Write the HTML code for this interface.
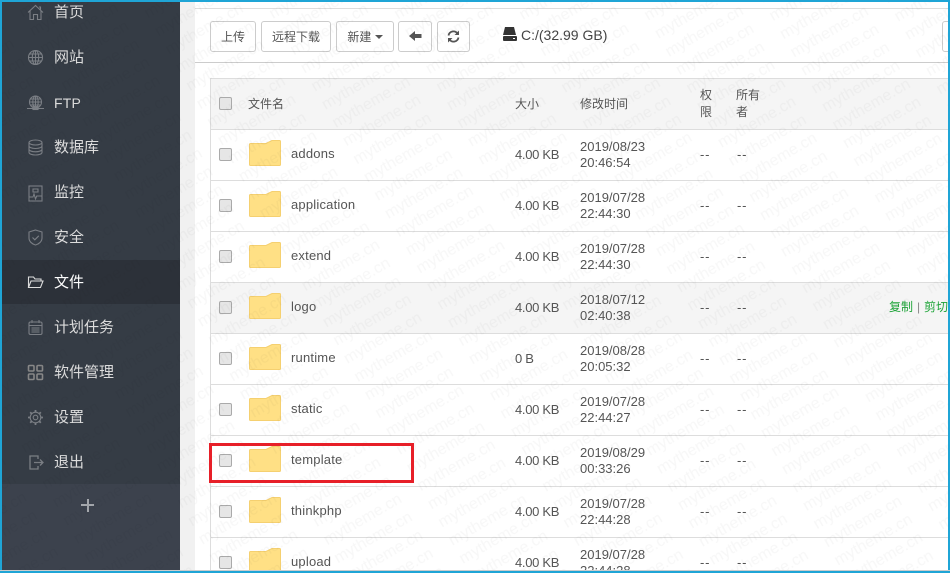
<!DOCTYPE html>
<html><head><meta charset="utf-8"><style>
html,body{margin:0;padding:0;background:#fff}
#p{position:relative;width:950px;height:573px;overflow:hidden;background:#fff;font:13px/16px "Liberation Sans","Noto Sans CJK SC",sans-serif;color:#555}
.a,.t,.s,.b,.c{position:absolute}
.t{white-space:nowrap}
.s{left:54px;font-size:15px;line-height:20px;color:#ddd;white-space:nowrap}
.b{top:21px;height:29px;border:1px solid #ccc;border-radius:3px;background:#fff;font-size:12px;line-height:30px;text-align:center;color:#555;box-sizing:content-box}
.c{left:219px;width:11px;height:11px;border:1px solid #aaa;border-radius:2px;background:#e6e6e6}
.l{position:absolute;left:210px;right:0;height:1px;background:#ddd}
.z{font-size:12px}
.k{letter-spacing:-.3px}
.d{letter-spacing:.8px}
.n{letter-spacing:.2px}
svg.i{position:absolute;left:27px;width:17px;height:17px;fill:none;stroke:#7b7f85;stroke-width:1.1}
</style></head><body><div id="p">

<div class="a" style="left:2px;top:0;width:178px;height:573px;background:#353c45"></div>
<div class="a" style="left:2px;top:260px;width:178px;height:44px;background:#2c3139"></div>
<div class="a" style="left:2px;top:484px;width:178px;height:89px;background:#3c424d"></div>
<div class="a" style="left:180px;top:0;width:15px;height:573px;background:#f1f1f1"></div>

<svg class="i" style="top:4px" viewBox="0 0 17 17"><path d="M1 8.500 8.500 1.500 16 8.500M3 7v8.500h3.500V10.500h4v5H14V7M12 3h1.500v2.500"/></svg>
<div class="s" style="top:3px">首页</div>
<svg class="i" style="top:49px" viewBox="0 0 17 17"><circle cx="8.500" cy="8.500" r="7"/><ellipse cx="8.500" cy="8.500" rx="3.200" ry="7"/><path d="M1.500 8.500h14M2.500 5h12M2.500 12h12M8.500 1.500v14"/></svg>
<div class="s" style="top:48px">网站</div>
<svg class="i" style="top:95px" viewBox="0 0 17 17"><circle cx="8.500" cy="7" r="6"/><ellipse cx="8.500" cy="7" rx="2.700" ry="6"/><path d="M2.500 7h12M3.500 4h10M3.500 10h10M8.500 1v10M0 13.500h17"/><rect x="6" y="11.500" width="5" height="3" fill="#7b7f85"/></svg>
<div class="s" style="top:93px;font-size:14px;letter-spacing:.2px">FTP</div>
<svg class="i" style="top:139px" viewBox="0 0 17 17"><ellipse cx="8.500" cy="3.500" rx="6.500" ry="2.500"/><path d="M2 3.500v10c0 1.400 2.900 2.500 6.500 2.500s6.500-1.100 6.500-2.500v-10M2 7c0 1.400 2.900 2.500 6.500 2.500S15 8.400 15 7M2 10.300c0 1.400 2.900 2.500 6.500 2.500s6.500-1.100 6.500-2.500"/></svg>
<div class="s" style="top:138px">数据库</div>
<svg class="i" style="top:185px" viewBox="0 0 17 17"><rect x="2" y="1" width="13" height="15"/><path d="M2 12h4l1-3 1.500 5 1.200-3H15M6 4h5v3H6z"/></svg>
<div class="s" style="top:183px">监控</div>
<svg class="i" style="top:229px" viewBox="0 0 17 17"><path d="M8.500 1 15 3v6c0 3.500-3 6-6.500 7C5 15 2 12.500 2 9V3zM5.500 8.500l2.300 2.300 4-4"/></svg>
<div class="s" style="top:228px">安全</div>
<svg class="i" style="top:274px;stroke:#ddd" viewBox="0 0 17 17"><path d="M1.500 13.500V3h5l1.500 2h6v2M1.500 13.500l2.500-6.500h12l-2.500 6.500z"/></svg>
<div class="s" style="top:273px;color:#fff">文件</div>
<svg class="i" style="top:319px" viewBox="0 0 17 17"><rect x="2" y="3" width="13" height="12.500" rx="1.500"/><path d="M5 1v3M12 1v3M2 6.500h13M4.500 9h8M4.500 11h8M4.500 13h8"/></svg>
<div class="s" style="top:318px">计划任务</div>
<svg class="i" style="top:364px;stroke-width:1.600;stroke:#888" viewBox="0 0 17 17"><rect x="1.500" y="1.500" width="5.500" height="5.500" rx="1"/><rect x="10" y="1.500" width="5.500" height="5.500" rx="1"/><rect x="1.500" y="10" width="5.500" height="5.500" rx="1"/><rect x="10" y="10" width="5.500" height="5.500" rx="1"/></svg>
<div class="s" style="top:363px">软件管理</div>
<svg class="i" style="top:409px" viewBox="0 0 17 17"><circle cx="8.500" cy="8.500" r="2.300"/><circle cx="8.500" cy="8.500" r="5.300"/><path d="M8.500 1v2.200M8.500 13.800V16M1 8.500h2.200M13.800 8.500H16M3.200 3.200l1.550 1.550M12.250 12.250l1.550 1.550M3.200 13.800l1.550-1.550M12.250 4.750l1.550-1.550" stroke-width="1.800"/></svg>
<div class="s" style="top:408px">设置</div>
<svg class="i" style="top:454px;stroke-width:1.300" viewBox="0 0 17 17"><path d="M11 5V2H3v13h8v-3M7 8.500h9M13 5.500l3 3-3 3"/></svg>
<div class="s" style="top:453px">退出</div>
<div class="a" style="left:81px;top:504px;width:13px;height:2px;background:#a5a8ad"></div>
<div class="a" style="left:87px;top:499px;width:2px;height:13px;background:#a5a8ad"></div>

<div class="a" style="left:195px;top:8px;right:0;height:1px;background:#ddd"></div>
<div class="a" style="left:195px;top:62px;right:0;height:1px;background:#ccc"></div>
<div class="b" style="left:210px;width:44px">上传</div>
<div class="b" style="left:261px;width:68px">远程下载</div>
<div class="b" style="left:336px;width:56px">新建 <span style="display:inline-block;width:0;height:0;border:4px solid transparent;border-top-color:#555;border-bottom:0;vertical-align:2px"></span></div>
<div class="b" style="left:398px;width:32px"><svg style="position:absolute;left:10px;top:8px" width="13" height="12" viewBox="0 0 13 12"><path d="M0 6 6 1v3h6.500v4H6v3z" fill="#555"/></svg></div>
<div class="b" style="left:437px;width:31px"><svg style="position:absolute;left:9px;top:8px" width="13" height="13" viewBox="0 0 13 13" fill="none" stroke="#555" stroke-width="1.800"><path d="M1.500 5.500A5 5 0 0 1 10.500 3.500M11.500 7.500A5 5 0 0 1 2.500 9.500"/><path d="M12 .5V5H7.500zM1 12.500V8h4.500z" fill="#555" stroke="none"/></svg></div>
<div class="b" style="left:942px;width:30px"></div>
<svg class="a" style="left:502px;top:27px" width="15" height="15" viewBox="0 0 15 15"><path d="M3 0h9l2 8H1z" fill="#333"/><rect x="1" y="9" width="14" height="5" rx="1" fill="#333"/><rect x="11" y="11" width="2" height="1" fill="#fff"/></svg>
<div class="t" style="left:521px;top:27px;font-size:14px;line-height:17px;color:#444">C:/(32.99 GB)</div>

<div class="a" style="left:210px;top:78px;right:0;height:51px;background:#f5f5f5"></div>
<div class="a" style="left:210px;top:282px;right:0;height:51px;background:#f5f5f5"></div>
<div class="a" style="left:210px;top:78px;width:1px;height:495px;background:#ddd"></div>
<div class="l" style="top:78px"></div><div class="l" style="top:129px"></div><div class="l" style="top:180px"></div><div class="l" style="top:231px"></div><div class="l" style="top:282px"></div><div class="l" style="top:333px"></div><div class="l" style="top:384px"></div><div class="l" style="top:435px"></div><div class="l" style="top:486px"></div><div class="l" style="top:537px"></div>

<div class="c" style="top:97px"></div>
<div class="t z" style="left:248px;top:96px">文件名</div>
<div class="t z" style="left:515px;top:96px">大小</div>
<div class="t z" style="left:580px;top:96px">修改时间</div>
<div class="t z" style="left:700px;top:87px;line-height:17px">权<br>限</div>
<div class="t z" style="left:736px;top:87px;line-height:17px">所有<br>者</div>

<svg width="0" height="0" style="position:absolute"><defs><g id="f"><path d="M.5 4.500Q.5 3.500 1.500 3.500H17L23 .5H30.500Q31.500 .5 31.500 1.500V24.500Q31.500 25.500 30.500 25.500H1.500Q.5 25.500 .5 24.500Z" fill="#ffe085" stroke="#f5d070"/></g></defs></svg>

<div class="c" style="top:148px"></div><svg class="a" style="left:249px;top:140px" width="32" height="26"><use href="#f"/></svg>
<div class="t n" style="left:291px;top:146px">addons</div><div class="t k" style="left:515px;top:147px">4.00 KB</div><div class="t" style="left:580px;top:139px">2019/08/23</div><div class="t" style="left:580px;top:155px">20:46:54</div><div class="t d" style="left:700px;top:147px">--</div><div class="t d" style="left:737px;top:147px">--</div>

<div class="c" style="top:199px"></div><svg class="a" style="left:249px;top:191px" width="32" height="26"><use href="#f"/></svg>
<div class="t n" style="left:291px;top:197px">application</div><div class="t k" style="left:515px;top:198px">4.00 KB</div><div class="t" style="left:580px;top:190px">2019/07/28</div><div class="t" style="left:580px;top:206px">22:44:30</div><div class="t d" style="left:700px;top:198px">--</div><div class="t d" style="left:737px;top:198px">--</div>

<div class="c" style="top:250px"></div><svg class="a" style="left:249px;top:242px" width="32" height="26"><use href="#f"/></svg>
<div class="t n" style="left:291px;top:248px">extend</div><div class="t k" style="left:515px;top:249px">4.00 KB</div><div class="t" style="left:580px;top:241px">2019/07/28</div><div class="t" style="left:580px;top:257px">22:44:30</div><div class="t d" style="left:700px;top:249px">--</div><div class="t d" style="left:737px;top:249px">--</div>

<div class="c" style="top:301px"></div><svg class="a" style="left:249px;top:293px" width="32" height="26"><use href="#f"/></svg>
<div class="t n" style="left:291px;top:299px">logo</div><div class="t k" style="left:515px;top:300px">4.00 KB</div><div class="t" style="left:580px;top:292px">2018/07/12</div><div class="t" style="left:580px;top:308px">02:40:38</div><div class="t d" style="left:700px;top:300px">--</div><div class="t d" style="left:737px;top:300px">--</div>
<div class="t z" style="left:889px;top:299px;color:#20a53a">复制<span style="position:absolute;left:28px;color:#888">|</span><span style="position:absolute;left:35px">剪切</span></div>

<div class="c" style="top:352px"></div><svg class="a" style="left:249px;top:344px" width="32" height="26"><use href="#f"/></svg>
<div class="t n" style="left:291px;top:350px">runtime</div><div class="t k" style="left:515px;top:351px">0 B</div><div class="t" style="left:580px;top:343px">2019/08/28</div><div class="t" style="left:580px;top:359px">20:05:32</div><div class="t d" style="left:700px;top:351px">--</div><div class="t d" style="left:737px;top:351px">--</div>

<div class="c" style="top:403px"></div><svg class="a" style="left:249px;top:395px" width="32" height="26"><use href="#f"/></svg>
<div class="t n" style="left:291px;top:401px">static</div><div class="t k" style="left:515px;top:402px">4.00 KB</div><div class="t" style="left:580px;top:394px">2019/07/28</div><div class="t" style="left:580px;top:410px">22:44:27</div><div class="t d" style="left:700px;top:402px">--</div><div class="t d" style="left:737px;top:402px">--</div>

<div class="c" style="top:454px"></div><svg class="a" style="left:249px;top:446px" width="32" height="26"><use href="#f"/></svg>
<div class="t n" style="left:291px;top:452px">template</div><div class="t k" style="left:515px;top:453px">4.00 KB</div><div class="t" style="left:580px;top:445px">2019/08/29</div><div class="t" style="left:580px;top:461px">00:33:26</div><div class="t d" style="left:700px;top:453px">--</div><div class="t d" style="left:737px;top:453px">--</div>

<div class="c" style="top:505px"></div><svg class="a" style="left:249px;top:497px" width="32" height="26"><use href="#f"/></svg>
<div class="t n" style="left:291px;top:503px">thinkphp</div><div class="t k" style="left:515px;top:504px">4.00 KB</div><div class="t" style="left:580px;top:496px">2019/07/28</div><div class="t" style="left:580px;top:512px">22:44:28</div><div class="t d" style="left:700px;top:504px">--</div><div class="t d" style="left:737px;top:504px">--</div>

<div class="c" style="top:556px"></div><svg class="a" style="left:249px;top:548px" width="32" height="26"><use href="#f"/></svg>
<div class="t n" style="left:291px;top:554px">upload</div><div class="t k" style="left:515px;top:555px">4.00 KB</div><div class="t" style="left:580px;top:547px">2019/07/28</div><div class="t" style="left:580px;top:563px">22:44:28</div><div class="t d" style="left:700px;top:555px">--</div><div class="t d" style="left:737px;top:555px">--</div>

<svg class="a" style="left:0;top:0" width="950" height="573"><defs><pattern id="w" width="108" height="21" patternUnits="userSpaceOnUse" patternTransform="translate(712 347.500) rotate(-30) translate(0 -15)"><text x="0" y="15" font-family="Liberation Sans, sans-serif" font-size="16" fill="#000" fill-opacity=".032">mytheme.cn</text></pattern></defs><rect width="950" height="573" fill="url(#w)"/></svg>

<div class="a" style="left:209px;top:443px;width:199px;height:34px;border:3px solid #e71f28"></div>

<div class="a" style="left:0;top:0;width:950px;height:2px;background:#1fa5d6"></div>
<div class="a" style="left:0;top:0;width:2px;height:573px;background:#1fa5d6"></div>
<div class="a" style="left:948px;top:0;width:2px;height:573px;background:#1fa5d6"></div>
<div class="a" style="left:0;top:570px;width:950px;height:1px;background:#ccc"></div>
<div class="a" style="left:0;top:571px;width:950px;height:2px;background:#1fa5d6"></div>
</div></body></html>
